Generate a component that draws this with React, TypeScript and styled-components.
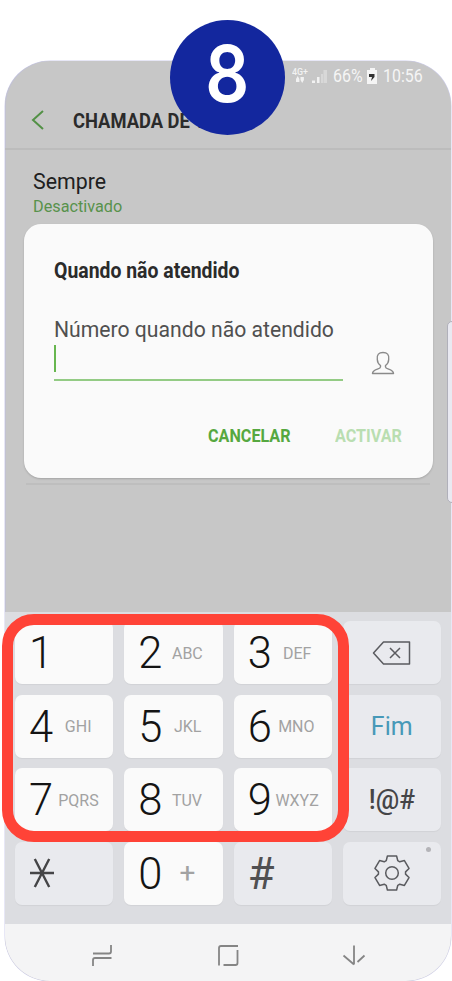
import React from "react";
import styled, { createGlobalStyle } from "styled-components";

const GlobalStyle = createGlobalStyle`
  * { box-sizing: border-box; }
  html, body { margin: 0; padding: 0; background: #fff; }
  body { font-family: Roboto, "Liberation Sans", sans-serif; overflow: hidden; }
`;

const Stage = styled.main`
  position: relative;
  width: 452px;
  height: 981px;
  padding: 61px 1px 0 5px;
  background: #fff;
  overflow: hidden;
`;

const Phone = styled.div`
  position: relative;
  display: flex;
  flex-direction: column;
  width: 446px;
  height: 919.5px;
  border-radius: 45px;
  overflow: hidden;
  background: #c7c7c7;
  box-shadow: inset 1px 0 0 #c2c2d2, 0 0 0 0.5px #d0d0ee;
`;

const Label = styled.span<{ $size: number; $weight?: number; $color: string; $squeeze?: number; $origin?: string }>`
  display: block;
  white-space: nowrap;
  font-size: ${(p) => p.$size}px;
  line-height: ${(p) => Math.round(p.$size * 1.2)}px;
  font-weight: ${(p) => p.$weight ?? 400};
  color: ${(p) => p.$color};
  transform: scaleX(${(p) => p.$squeeze ?? 1});
  transform-origin: ${(p) => p.$origin ?? "left"} center;
`;

const StatusBar = styled.div`
  display: flex;
  align-items: center;
  height: 29px;
  padding-left: 287px;
`;

const StatusIcons = styled.svg`
  display: block;
  width: 37px;
  height: 20px;
  margin-right: 3.5px;
  flex: none;
`;

const StatusCell = styled.div<{ $width: number }>`
  flex: none;
  width: ${(p) => p.$width}px;
`;

const NetworkLabel = styled.text`
  font: 500 9px Roboto, sans-serif;
  fill: #f2f2f2;
`;

const TitleBar = styled.header`
  display: flex;
  align-items: center;
  height: 60px;
  padding: 4px 0 0 26px;
  border-bottom: 2px solid #bcbcbc;
`;

const BackIcon = styled.svg`
  width: 14px;
  height: 22px;
  margin-right: 28px;
  flex: none;
`;

const SettingsList = styled.section`
  height: 462px;
  padding: 19px 21px 0;
`;

const SettingItem = styled.div`
  display: flex;
  flex-direction: column;
  gap: 1px;
  height: 316px;
  padding-left: 7px;
  border-bottom: 2px solid #bebebe;
`;

const Dialog = styled.section`
  position: absolute;
  top: 163px;
  left: 18.5px;
  width: 409px;
  height: 253.5px;
  padding: 34px 30px 0;
  border-radius: 17px;
  background: #fafafa;
  box-shadow: 0 1px 2px rgba(0, 0, 0, 0.18);
`;

const FieldLabel = styled.div`
  margin-top: 33px;
`;

const Field = styled.div`
  display: flex;
  align-items: flex-end;
  justify-content: space-between;
  margin-top: 2px;
  padding-right: 8px;
`;

const Input = styled.div`
  width: 289px;
  height: 36px;
  border-bottom: 2px solid #93cb84;
`;

const Caret = styled.div`
  width: 2px;
  height: 27px;
  background: #67b64f;
`;

const PersonIcon = styled.svg`
  width: 24px;
  height: 24px;
  margin-bottom: 6px;
`;

const Actions = styled.div`
  display: flex;
  margin-top: 43px;
  padding-left: 154px;
`;

const Action = styled.div<{ $width: number }>`
  width: ${(p) => p.$width}px;
`;

const Keyboard = styled.section`
  display: grid;
  grid-template-columns: repeat(4, 98.3px);
  grid-template-rows: repeat(4, 63px);
  gap: 10.6px 11.05px;
  height: 311.5px;
  padding: 9px 0 0 10px;
  background: #dcdde1;
`;

const Key = styled.div<{ $soft?: boolean }>`
  position: relative;
  display: flex;
  align-items: center;
  border-radius: 7px;
  background: ${(p) => (p.$soft ? "#e9eaee" : "#fafafa")};
  box-shadow: 0 1px 1px rgba(0, 0, 0, 0.05);
`;

const Digit = styled.span<{ $symbol?: boolean }>`
  width: 24px;
  margin-left: 14px;
  padding-top: 2px;
  text-align: center;
  font-size: 43.5px;
  line-height: 61px;
  font-weight: ${(p) => (p.$symbol ? 400 : 300)};
  color: ${(p) => (p.$symbol ? "#505052" : "#141414")};
`;

const Letters = styled.span`
  display: flex;
  justify-content: center;
  width: 50px;
`;

const CenteredKey = styled(Key)`
  justify-content: center;
`;

const KeyIcon = styled.svg<{ $size: number }>`
  display: block;
  width: ${(p) => p.$size}px;
  height: ${(p) => p.$size}px;
`;

const StarIcon = styled.svg`
  width: 26px;
  height: 32px;
  margin-left: 13.5px;
`;

const Dot = styled.i`
  position: absolute;
  top: 5px;
  right: 10px;
  width: 5px;
  height: 5px;
  border-radius: 50%;
  background: #b4b4b8;
`;

const NavBar = styled.nav`
  display: flex;
  flex: 1;
  align-items: center;
  justify-content: space-between;
  padding: 5px 85px 0 85px;
  background: #f4f4f5;
`;

const NavIcon = styled.svg`
  width: 24px;
  height: 24px;
`;

const Highlight = styled.div`
  position: absolute;
  top: 613.5px;
  left: 2px;
  width: 346.5px;
  height: 228.5px;
  border: 11px solid #ff4337;
  border-radius: 32px;
`;

const StepBadge = styled.div`
  position: absolute;
  top: 19.5px;
  left: 170px;
  display: flex;
  align-items: center;
  justify-content: center;
  width: 115px;
  height: 115px;
  padding-bottom: 7px;
  border-radius: 50%;
  background: #13279e;
  font-family: Inter, sans-serif;
`;

const EdgeHandle = styled.div`
  position: absolute;
  top: 321px;
  left: 447px;
  width: 10px;
  height: 182px;
  border: 1px solid #b0b0ba;
  border-radius: 6px;
  background: #e9e9f1;
`;

const gearPath = (() => {
  const tooth = [[-5.8, -12.3], [-4.6, -17], [4.6, -17], [5.8, -12.3]];
  const points: string[] = [];
  for (let i = 0; i < 6; i++) {
    const a = (i * Math.PI) / 3;
    for (const [x, y] of tooth) {
      points.push(`${(x * Math.cos(a) - y * Math.sin(a)).toFixed(2)} ${(x * Math.sin(a) + y * Math.cos(a)).toFixed(2)}`);
    }
  }
  return `M${points.join("L")}Z`;
})();

type KeySpec = { digit: string; letters?: string };

const NumberKey = ({ digit, letters }: KeySpec) => (
  <Key>
    <Digit>{digit}</Digit>
    {letters && (
      <Letters>
        <Label
          $size={letters === "+" ? 28 : 17}
          $color="#a2a2a2"
          $squeeze={letters === "+" ? 1 : 0.94}
          $origin="center"
        >
          {letters}
        </Label>
      </Letters>
    )}
  </Key>
);

export default function App() {
  return (
    <Stage>
      <GlobalStyle />
      <Phone>
        <StatusBar>
          <StatusIcons viewBox="0 0 37 20">
            <NetworkLabel x="0" y="8.500" textLength="16" lengthAdjust="spacingAndGlyphs">4G+</NetworkLabel>
            <path d="M4 13l1.700-3 1.700 3v3H4zM8.500 11h3.400v3l-1.700 3-1.700-3z" fill="#f2f2f2" />
            <path d="M20 17v-2.500h3V17zM25 17v-6h2.500v6z" fill="#f2f2f2" />
            <path d="M29 17V8h2v9zM31.500 17V4H35v13z" fill="#d8d8d8" />
          </StatusIcons>
          <StatusCell $width={31.5}>
            <Label $size={18.5} $color="#f5f5f5" $squeeze={0.86}>66%</Label>
          </StatusCell>
          <StatusCell $width={18.5}>
            <KeyIcon $size={16} viewBox="0 0 16 16">
              <path d="M3 2h3V0h5v2h2v14H3z" fill="#f5f5f5" />
              <path d="M5 6h5.500v3L7 13l1-4H5z" fill="#333" />
            </KeyIcon>
          </StatusCell>
          <Label $size={18.5} $color="#f5f5f5" $squeeze={0.86}>10:56</Label>
        </StatusBar>
        <TitleBar>
          <BackIcon viewBox="0 0 14 22">
            <path d="M12 1L2 10l10 9" fill="none" stroke="#539146" strokeWidth="2" />
          </BackIcon>
          <Label $size={21} $weight={700} $color="#2b2b2b" $squeeze={0.873}>CHAMADA DE VOZ</Label>
        </TitleBar>
        <SettingsList>
          <SettingItem>
            <Label $size={22} $color="#202020" $squeeze={0.97}>Sempre</Label>
            <Label $size={17} $color="#58924c" $squeeze={0.955}>Desactivado</Label>
          </SettingItem>
        </SettingsList>
        <Keyboard>
          <NumberKey digit="1" />
          <NumberKey digit="2" letters="ABC" />
          <NumberKey digit="3" letters="DEF" />
          <CenteredKey $soft>
            <KeyIcon $size={40} viewBox="0 0 40 40">
              <path d="M11.500 9h26v22h-26L1.500 20z" fill="none" stroke="#5a5b5f" strokeWidth="1.5" strokeLinejoin="round" />
              <path d="M18 15l10 10M28 15L18 25" stroke="#5a5b5f" strokeWidth="1.5" />
            </KeyIcon>
          </CenteredKey>
          <NumberKey digit="4" letters="GHI" />
          <NumberKey digit="5" letters="JKL" />
          <NumberKey digit="6" letters="MNO" />
          <CenteredKey $soft>
            <Label $size={26} $color="#4799b8" $squeeze={0.96} $origin="center">Fim</Label>
          </CenteredKey>
          <NumberKey digit="7" letters="PQRS" />
          <NumberKey digit="8" letters="TUV" />
          <NumberKey digit="9" letters="WXYZ" />
          <CenteredKey $soft>
            <Label $size={27} $weight={500} $color="#454547" $squeeze={0.97} $origin="center">!@#</Label>
          </CenteredKey>
          <Key $soft>
            <StarIcon viewBox="0 0 26 32">
              <path d="M1 16h24M5.800 2l14.400 28M20.200 2L5.800 30" stroke="#454547" strokeWidth="2.4" fill="none" />
            </StarIcon>
          </Key>
          <NumberKey digit="0" letters="+" />
          <Key $soft>
            <Digit $symbol>#</Digit>
          </Key>
          <CenteredKey $soft>
            <KeyIcon $size={40} viewBox="-20 -20 40 40">
              <path d={gearPath} fill="none" stroke="#5a5b5f" strokeWidth="1.5" strokeLinejoin="round" />
              <circle r="6.300" fill="none" stroke="#5a5b5f" strokeWidth="1.5" />
            </KeyIcon>
            <Dot />
          </CenteredKey>
        </Keyboard>
        <NavBar>
          <NavIcon viewBox="0 0 24 24">
            <path d="M3 10.500h16q2 0 2-2V2M21.500 15H5q-2 0-2 2v6" fill="none" stroke="#858585" strokeWidth="1.8" />
          </NavIcon>
          <NavIcon viewBox="0 0 24 24">
            <path d="M3 22.500V5q0-2 2-2h17M21.500 7v13q0 2-2 2H7.500" fill="none" stroke="#858585" strokeWidth="1.8" />
          </NavIcon>
          <NavIcon viewBox="0 0 24 24">
            <path d="M12 2.500v19M1.500 12.500L12 21.500M15.500 19l7-6.500" fill="none" stroke="#858585" strokeWidth="1.8" />
          </NavIcon>
        </NavBar>
        <Dialog>
          <Label $size={22} $weight={700} $color="#2b2b2b" $squeeze={0.882}>Quando não atendido</Label>
          <FieldLabel>
            <Label $size={22} $color="#505050" $squeeze={0.962}>Número quando não atendido</Label>
          </FieldLabel>
          <Field>
            <Input><Caret /></Input>
            <PersonIcon viewBox="0 0 24 24">
              <path d="M9.500 16v-1.500Q6.500 12.500 6.300 8.500C5.500 3.500 8 1.500 12 1.500s6.500 2 5.700 7Q17.500 12.500 14.500 14.500V16c0 2.500 8 2 8 6.500h-21c0-4.500 8-4 8-6.500z" fill="none" stroke="#8a8a8a" strokeWidth="1.4" strokeLinejoin="round" />
            </PersonIcon>
          </Field>
          <Actions>
            <Action $width={130.5}>
              <Label $size={19} $weight={700} $color="#56a840" $squeeze={0.85}>CANCELAR</Label>
            </Action>
            <Action $width={68}>
              <Label $size={19} $weight={700} $color="#b9deb1" $squeeze={0.85}>ACTIVAR</Label>
            </Action>
          </Actions>
        </Dialog>
      </Phone>
      <EdgeHandle />
      <Highlight />
      <StepBadge>
        <Label $size={79} $weight={560} $color="#fff" $squeeze={0.87} $origin="center">8</Label>
      </StepBadge>
    </Stage>
  );
}
